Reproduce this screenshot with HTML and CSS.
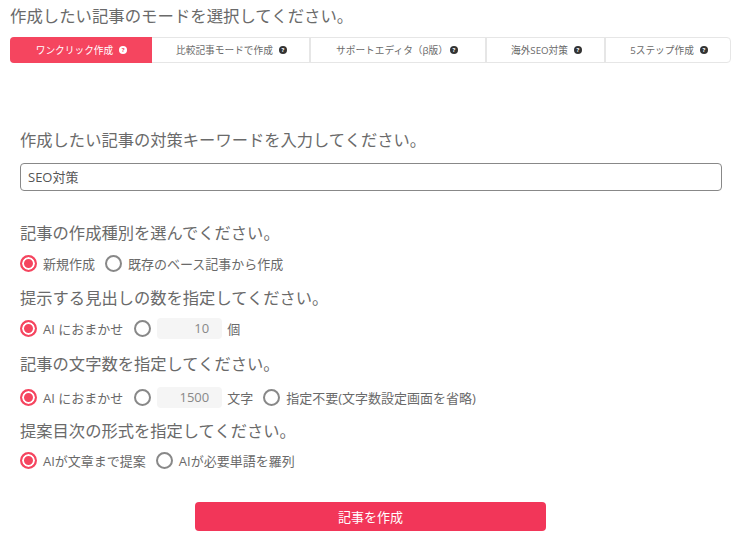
FILE: index.html
```html
<!DOCTYPE html>
<html lang="ja">
<head>
    <meta charset="UTF-8">
    <title>記事を作成</title>
    <link rel="stylesheet" href="styles.css">
</head>
<body>
    <p class="page-title">作成したい記事のモードを選択してください。</p>

    <div class="tabs">
        <div class="tab tab-active tab-1">ワンクリック作成 <span class="help">?</span></div>
        <div class="tab tab-2">比較記事モードで作成 <span class="help">?</span></div>
        <div class="tab tab-3">サポートエディタ（β版） <span class="help">?</span></div>
        <div class="tab tab-4">海外SEO対策 <span class="help">?</span></div>
        <div class="tab tab-5">5ステップ作成 <span class="help">?</span></div>
    </div>

    <div class="form">
        <p class="heading keyword-heading">作成したい記事の対策キーワードを入力してください。</p>
        <input type="text" class="keyword" value="SEO対策">

        <p class="heading kind-heading">記事の作成種別を選んでください。</p>
        <div class="options">
            <label class="option"><span class="radio checked"></span>新規作成</label>
            <label class="option"><span class="radio"></span>既存のベース記事から作成</label>
        </div>

        <p class="heading">提示する見出しの数を指定してください。</p>
        <div class="options">
            <label class="option"><span class="radio checked"></span>AI におまかせ</label>
            <label class="option number-option"><span class="radio"></span><span class="number">10</span>個</label>
        </div>

        <p class="heading length-heading">記事の文字数を指定してください。</p>
        <div class="options length-options">
            <label class="option"><span class="radio checked"></span>AI におまかせ</label>
            <label class="option number-option"><span class="radio"></span><span class="number">1500</span>文字</label>
            <label class="option"><span class="radio"></span>指定不要(文字数設定画面を省略)</label>
        </div>

        <p class="heading format-heading">提案目次の形式を指定してください。</p>
        <div class="options format-options">
            <label class="option"><span class="radio checked"></span>AIが文章まで提案</label>
            <label class="option"><span class="radio"></span>AIが必要単語を羅列</label>
        </div>

        <button class="submit">記事を作成</button>
    </div>
</body>
</html>
```

FILE: styles.css
```css
body {
    margin: 0;
    background-color: white;
    font-family: "Open Sans", "Noto Sans CJK JP", sans-serif;
    color: #6a6a6a;
    overflow: hidden;
}

p {
    margin: 0;
}

.page-title {
    margin: 5px 0 0 10px;
    font-size: 16.4px;
    line-height: 22px;
}

.tabs {
    display: flex;
    width: 721px;
    height: 26px;
    margin: 10px 0 0 10px;
    box-sizing: border-box;
    border: 1px solid #e6e6e6;
    border-radius: 4px;
}

.tab {
    display: flex;
    align-items: center;
    justify-content: center;
    gap: 6px;
    padding-left: 2px;
    box-sizing: border-box;
    font-size: 9.7px;
    border-right: 2px solid #e6e6e6;
}

.tab-1 { width: 141px; }
.tab-2 { width: 159px; }
.tab-3 { width: 176px; gap: 2px; padding-right: 4px; }
.tab-4 { width: 119px; }
.tab-5 { flex: 1; border-right: none; }

.tab-active {
    margin: -1px 0 -1px -1px;
    width: 142px;
    padding-left: 1px;
    border: none;
    border-radius: 4px 0 0 4px;
    background-color: #f5455f;
    color: white;
}

.help {
    display: inline-block;
    width: 8px;
    height: 8px;
    border-radius: 50%;
    background-color: #333;
    color: white;
    font-size: 6px;
    font-weight: bold;
    line-height: 8px;
    text-align: center;
}

.tab-active .help {
    background-color: white;
    color: #f5455f;
}

.form {
    margin: 0 13px 0 20px;
}

.heading {
    font-size: 16.3px;
    line-height: 22px;
    margin-top: 12px;
}

.keyword-heading {
    margin-top: 66px;
}

.kind-heading {
    margin-top: 31px;
}

.length-heading {
    margin-top: 13px;
}

.format-heading {
    margin-top: 11px;
}

.keyword {
    display: block;
    width: 100%;
    height: 28px;
    margin-top: 12px;
    padding: 0 7px 2px;
    box-sizing: border-box;
    border: 1px solid #888;
    border-radius: 4px;
    font-family: inherit;
    font-size: 13px;
    color: #555;
}

.options {
    display: flex;
    align-items: center;
    gap: 10px;
    height: 24px;
    margin-top: 7px;
    font-size: 13px;
}

.length-options {
    margin-top: 10px;
}

.format-options {
    margin-top: 6px;
}

.option {
    display: flex;
    align-items: center;
}

.number-option {
    margin-left: 1px;
}

.radio {
    width: 17px;
    height: 17px;
    margin-right: 6px;
    box-sizing: border-box;
    border: 2px solid #888;
    border-radius: 50%;
    background-color: white;
}

.radio.checked {
    border-color: #f5455f;
    background-color: #f5455f;
    box-shadow: inset 0 0 0 2px white;
}

.number {
    width: 65px;
    height: 21px;
    margin-right: 5px;
    padding-right: 13px;
    box-sizing: border-box;
    border-radius: 4px;
    background-color: #f5f5f5;
    color: #888;
    line-height: 21px;
    text-align: right;
}

.submit {
    display: block;
    width: 351px;
    height: 29px;
    margin: 30px 0 0 175px;
    border: none;
    border-radius: 4px;
    background-color: #f23659;
    color: white;
    font-family: inherit;
    font-size: 13px;
}
```
